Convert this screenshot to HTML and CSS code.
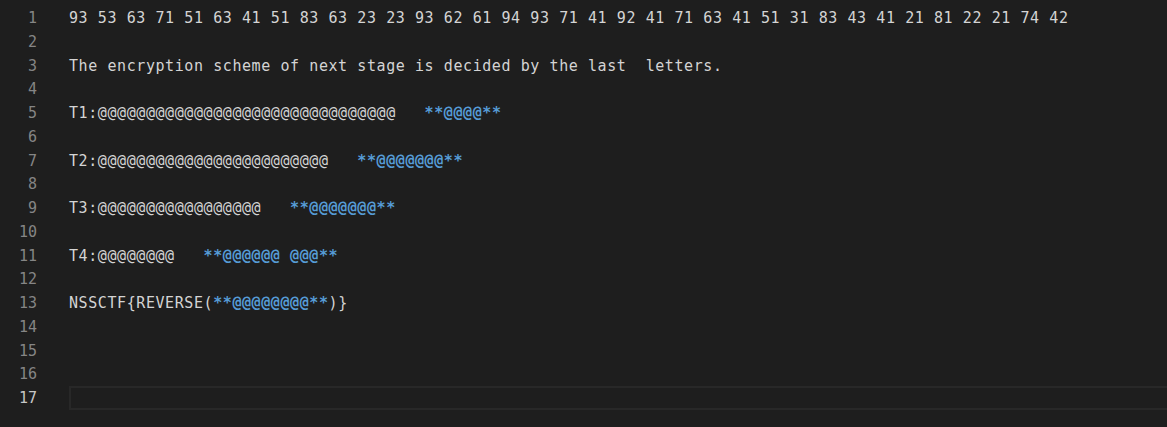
FILE: index.html
```html
<!DOCTYPE html>
<html>
<head>
<meta charset="utf-8">
<link rel="stylesheet" href="styles.css">
</head>
<body>
<div class="editor">
  <div class="line"><span class="ln">1</span><span class="code">93 53 63 71 51 63 41 51 83 63 23 23 93 62 61 94 93 71 41 92 41 71 63 41 51 31 83 43 41 21 81 22 21 74 42</span></div>
  <div class="line"><span class="ln">2</span><span class="code"></span></div>
  <div class="line"><span class="ln">3</span><span class="code">The encryption scheme of next stage is decided by the last  letters.</span></div>
  <div class="line"><span class="ln">4</span><span class="code"></span></div>
  <div class="line"><span class="ln">5</span><span class="code">T1:@@@@@@@@@@@@@@@@@@@@@@@@@@@@@@@   <b class="bold">**@@@@**</b></span></div>
  <div class="line"><span class="ln">6</span><span class="code"></span></div>
  <div class="line"><span class="ln">7</span><span class="code">T2:@@@@@@@@@@@@@@@@@@@@@@@@   <b class="bold">**@@@@@@@**</b></span></div>
  <div class="line"><span class="ln">8</span><span class="code"></span></div>
  <div class="line"><span class="ln">9</span><span class="code">T3:@@@@@@@@@@@@@@@@@   <b class="bold">**@@@@@@@**</b></span></div>
  <div class="line"><span class="ln">10</span><span class="code"></span></div>
  <div class="line"><span class="ln">11</span><span class="code">T4:@@@@@@@@   <b class="bold">**@@@@@@ @@@**</b></span></div>
  <div class="line"><span class="ln">12</span><span class="code"></span></div>
  <div class="line"><span class="ln">13</span><span class="code">NSSCTF{REVERSE(<b class="bold">**@@@@@@@@**</b>)}</span></div>
  <div class="line"><span class="ln">14</span><span class="code"></span></div>
  <div class="line"><span class="ln">15</span><span class="code"></span></div>
  <div class="line"><span class="ln">16</span><span class="code"></span></div>
  <div class="line active"><span class="ln">17</span><span class="code"></span></div>
</div>
</body>
</html>
```

FILE: styles.css
```css
html, body {
  margin: 0;
  padding: 0;
  background: #1e1e1e;
  height: 100%;
  overflow: hidden;
}
.editor {
  padding-top: 6px;
  font-family: "DejaVu Sans Mono", "Liberation Mono", monospace;
  font-size: 15px;
  letter-spacing: 0.58px;
  color: #d4d4d4;
}
.line {
  display: flex;
  height: 23.75px;
  line-height: 25px;
  white-space: pre;
}
.ln {
  width: 37px;
  text-align: right;
  color: #858585;
  letter-spacing: 0;
  flex: none;
}
.code {
  margin-left: 32px;
  flex: 1;
  box-sizing: border-box;
}
.bold {
  color: #569cd6;
  font-weight: bold;
}
.active .ln {
  color: #c6c6c6;
}
.active .code {
  border: 2px solid #282828;
  border-right: none;
  height: 23.75px;
}
```
